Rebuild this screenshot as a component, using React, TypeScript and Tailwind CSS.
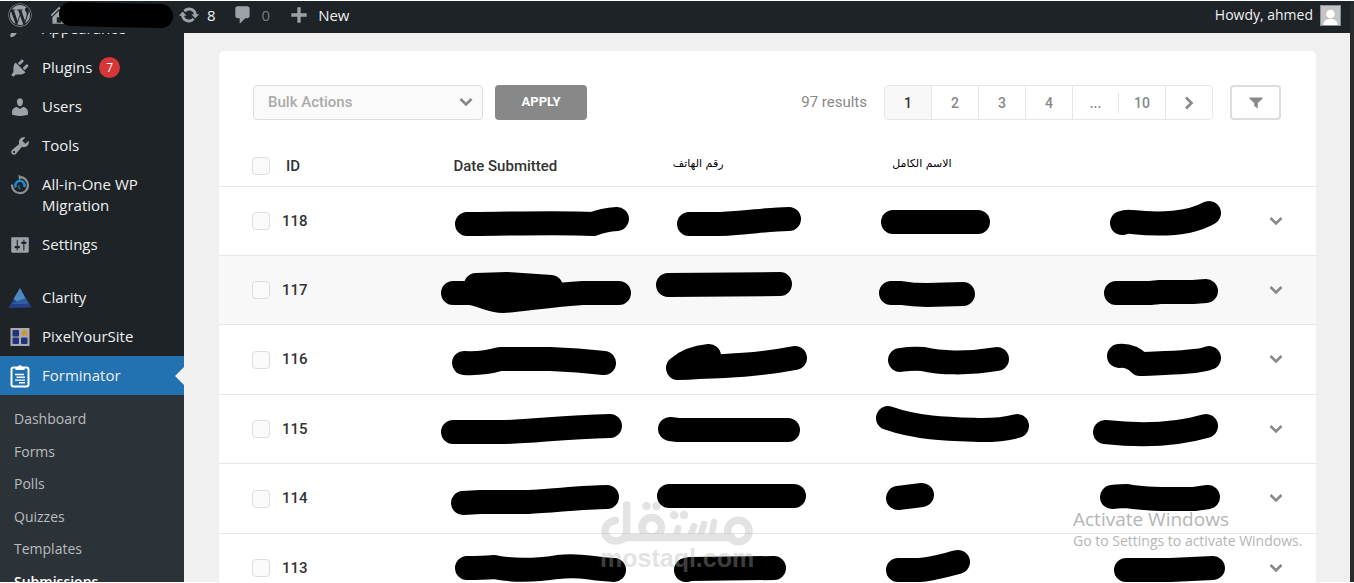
import React from "react";
import { FaWordpress } from "react-icons/fa";

const ICONS = {
  plugins:
    "M13.11 4.36L9.87 7.6 8 5.73l3.24-3.24c.35-.34 1.05-.2 1.56.32.52.51.66 1.21.31 1.55zm-8 1.77l.91-1.12 9.01 9.01-1.19.84c-.71.71-2.63 1.16-3.82 1.16H6.14L4.9 17.26c-.59.59-1.54.59-2.12 0-.59-.58-.59-1.53 0-2.12l1.24-1.24v-3.88c0-1.13.4-3.19 1.09-3.89zm7.26 3.97l3.24-3.24c.34-.35 1.04-.21 1.55.31.52.51.66 1.21.31 1.55l-3.24 3.25z",
  users:
    "M10 9.25c-2.27 0-2.73-3.44-2.73-3.44C7 4.02 7.82 2 9.97 2c2.16 0 2.98 2.02 2.71 3.81 0 0-.41 3.44-2.68 3.44zm0 2.57L12.72 10c2.39 0 4.52 2.33 4.52 4.53v2.49s-3.65 1.13-7.24 1.13c-3.65 0-7.24-1.13-7.24-1.13v-2.49c0-2.25 1.94-4.48 4.47-4.48z",
  tools:
    "M16.68 9.77c-1.34 1.34-3.3 1.67-4.95.99l-5.41 6.52c-.99.99-2.59.99-3.58 0s-.99-2.59 0-3.57l6.52-5.42c-.68-1.65-.35-3.61.99-4.95 1.28-1.28 3.12-1.62 4.72-1.06l-2.89 2.89 2.82 2.82 2.86-2.87c.53 1.58.18 3.39-1.08 4.65zM3.81 16.21c.4.39 1.04.39 1.43 0 .4-.4.4-1.04 0-1.43-.39-.4-1.03-.4-1.43 0-.39.39-.39 1.03 0 1.43z",
  settings:
    "M18 16V4c0-.55-.45-1-1-1H3c-.55 0-1 .45-1 1v12c0 .55.45 1 1 1h14c.55 0 1-.45 1-1zM8 11h1c.55 0 1 .45 1 1s-.45 1-1 1H8v1.5c0 .28-.22.5-.5.5s-.5-.22-.5-.5V13H6c-.55 0-1-.45-1-1s.45-1 1-1h1V5.5c0-.28.22-.5.5-.5s.5.22.5.5V11zm5-2h-1c-.55 0-1-.45-1-1s.45-1 1-1h1V5.5c0-.28.22-.5.5-.5s.5.22.5.5V7h1c.55 0 1 .45 1 1s-.45 1-1 1h-1v5.5c0 .28-.22.5-.5.5s-.5-.22-.5-.5V9z",
  update:
    "M10.2 3.28c3.53 0 6.43 2.61 6.92 6h2.08l-3.5 4-3.5-4h2.32c-.45-1.97-2.21-3.45-4.32-3.45-1.45 0-2.73.71-3.54 1.78L4.95 5.66C6.23 4.2 8.11 3.28 10.2 3.28zm-.4 13.44c-3.52 0-6.43-2.61-6.92-6H.8l3.5-4c1.17 1.33 2.33 2.67 3.5 4H5.48c.45 1.97 2.21 3.45 4.32 3.45 1.45 0 2.73-.71 3.54-1.78l1.71 1.95c-1.28 1.46-3.15 2.38-5.25 2.38z",
  comments:
    "M5 2h9c1.1 0 2 .9 2 2v7c0 1.1-.9 2-2 2h-2l-5 5v-5H5c-1.1 0-2-.9-2-2V4c0-1.1.9-2 2-2z",
  plus: "M17 8.5v3h-5.5V17h-3v-5.5H3v-3h5.5V3h3v5.5H17z",
  home: "M16 8.5l1.53 1.53-1.06 1.06L10 4.6l-6.47 6.49-1.06-1.06L10 2.5l4 4v-2h2v4zm-6-2.46l6 5.99V18H4v-5.97zM12 17v-5H8v5h4z",
  appearance:
    "M14.48 11.06L7.41 3.99l1.5-1.5c.5-.56 2.3-.47 3.51.32 1.21.8 1.43 1.28 2.91 2.1 1.18.64 2.45 1.26 4.45.85zm-.71.71L6.7 4.7 4.93 6.47c-.39.39-.39 1.02 0 1.41l1.06 1.06c.39.39.39 1.03 0 1.42-.6.6-1.43 1.11-2.21 1.69-.35.26-.7.53-1.01.84C1.43 14.23.4 16.08 1.4 17.07c.99 1 2.84-.03 4.18-1.36.31-.31.58-.66.85-1.02.57-.78 1.08-1.61 1.69-2.21.39-.39 1.02-.39 1.41 0l1.06 1.06c.39.39 1.02.39 1.41 0z",
};

function Dashicon({ d, className = "size-[22px]" }: { d: string; className?: string }) {
  return (
    <svg viewBox="0 0 20 20" className={`${className} shrink-0 fill-[#9ca2a7]`} aria-hidden="true">
      <path d={d} />
    </svg>
  );
}

function MigrationIcon() {
  return (
    <svg viewBox="0 0 20 20" className="size-5 shrink-0 fill-none" aria-hidden="true">
      <path d="M9.500 2.200A8 8 0 1 1 2 9.500" stroke="#8f8f8f" strokeWidth="2.200" />
      <path d="M8.500 -.5L12.500 2.300L9 5.200z" fill="#8f8f8f" />
      <path d="M5.800 12.500A4.600 4.600 0 1 1 14.300 12" stroke="#1c8fdb" strokeWidth="2.400" />
      <path d="M10.500 14a3 3 0 0 1-1.500-4" stroke="#1c6fb4" strokeWidth="1.300" />
    </svg>
  );
}

function ClarityIcon() {
  return (
    <svg viewBox="0 0 24 22" className="h-[22px] w-6 shrink-0" aria-hidden="true">
      <path d="M12 1L23.500 20.500L.5 21z" fill="#27408b" />
      <path d="M12 1L17.500 11.500L9 14.500L5.500 12z" fill="#4a8cc0" />
      <path d="M9 14.500L17.500 11.500L21 17L3 17z" fill="#2f5ca3" />
    </svg>
  );
}

function PixelIcon() {
  return (
    <svg viewBox="0 0 20 20" className="size-5 shrink-0" aria-hidden="true">
      <rect x="0.500" y="1" width="19" height="18" fill="#a9abae" />
      <rect x="2.500" y="3" width="6.500" height="6.500" rx="1" fill="#23327c" />
      <rect x="2.500" y="10.500" width="6.500" height="6.500" rx="1" fill="#23327c" />
      <rect x="11" y="10.500" width="6.500" height="6.500" rx="1" fill="#23327c" />
      <path d="M14.200 2l1.300 2 2.400.3-1.200 2 .8 2.300-2.500-.3-1.900 1.300-.6-2.300-1.800-1.400 2-1.300z" fill="#c9972f" />
    </svg>
  );
}

function ForminatorIcon() {
  return (
    <svg viewBox="0 0 20 24" className="h-6 w-5 shrink-0 fill-none stroke-white" aria-hidden="true">
      <rect x="1.500" y="3.500" width="17" height="19" rx="2" strokeWidth="2" />
      <path d="M6 5.500V3.500h2.300a1.700 1.700 0 0 1 3.400 0H14v2z" fill="#fff" strokeWidth="1.200" />
      <path d="M5 10.500h9M6.500 13.300h8.500M5 16.100h10M9 18.700h6" strokeWidth="1.400" />
    </svg>
  );
}

const menuTop = [
  { label: "Appearance", icon: <Dashicon d={ICONS.appearance} /> },
  { label: "Plugins", icon: <Dashicon d={ICONS.plugins} />, count: 7 },
  { label: "Users", icon: <Dashicon d={ICONS.users} /> },
  { label: "Tools", icon: <Dashicon d={ICONS.tools} /> },
  { label: "All-in-One WP Migration", icon: <MigrationIcon /> },
  { label: "Settings", icon: <Dashicon d={ICONS.settings} /> },
];

const menuPlugins = [
  { label: "Clarity", icon: <ClarityIcon /> },
  { label: "PixelYourSite", icon: <PixelIcon /> },
  { label: "Forminator", icon: <ForminatorIcon />, active: true },
];

const submenu = ["Dashboard", "Forms", "Polls", "Quizzes", "Templates", "Submissions"];

type Item = { label: string; icon: React.ReactNode; count?: number; active?: boolean };

function MenuItem({ label, icon, count, active }: Item) {
  return (
    <li className={active ? "relative bg-[#2271b1]" : ""}>
      <a href="#" className="flex items-start py-[9px] pr-8 text-[15px] leading-[21px] text-[#f0f0f1]">
        <span className="flex h-[21px] w-[42px] shrink-0 items-center justify-center pr-0.5">{icon}</span>
        <span>{label}</span>
        {count !== undefined && (
          <span className="ml-[7px] flex size-[21px] items-center justify-center rounded-full bg-[#d63638] text-xs text-white">
            {count}
          </span>
        )}
      </a>
      {active && (
        <span className="absolute top-[11px] right-0 border-y-[9px] border-r-[9px] border-y-transparent border-r-[#f0f0f1]" />
      )}
    </li>
  );
}

const rows = [
  {
    id: 118,
    marks: [
      "M29 37C70 37 120 35 155 37Q165 33 179 32",
      "M31 37H62C90 36 110 32 131 32",
      "M16 35H101",
      "M25 36Q30 34 35 35C62 38 93 37 112 26",
    ],
  },
  {
    id: 117,
    marks: [
      "M15 37H32C45 39 52 45 65 45C85 44 110 39 145 37H181M38 29L69 28L113 31",
      "M10 29L122 28",
      "M14 37H24Q36 39 50 39L86 38",
      "M19 37H53L63 36H96L109 35",
    ],
  },
  {
    id: 116,
    marks: [
      "M26 38Q45 39 62 34H112Q140 35 166 38",
      "M20 43C28 36 40 32 51 31M20 43Q30 43 40 42C70 41 100 40 137 33",
      "M23 35Q36 33 46 34C62 38 90 39 120 34",
      "M22 31C32 30 38 34 43 39C60 38 100 38 112 33",
    ],
  },
  {
    id: 115,
    marks: [
      "M15 37H68C100 36 125 32 172 31",
      "M12 34L20 35H130",
      "M11 23C42 34 75 34 105 35Q125 35 140 31",
      "M8 37C35 40 75 41 109 31",
    ],
  },
  {
    id: 114,
    marks: [
      "M25 39L42 38H90C115 37 145 33 169 33",
      "M11 32H136",
      "M21 34L45 31",
      "M15 33Q25 32 30 32C50 36 75 35 97 35L111 33",
    ],
  },
  {
    id: 113,
    marks: [
      "M29 34Q45 34 56 33C75 37 100 36 120 33C145 30 150 35 176 36",
      "M28 36L32 35L116 34",
      "M21 36H42C56 35 68 31 81 28",
      "M29 36H73L116 34",
    ],
  },
];

function Mark({ d, className }: { d: string; className: string }) {
  return (
    <svg
      className={`block h-[68px] overflow-visible fill-none stroke-black ${className}`}
      strokeWidth="24"
      strokeLinecap="round"
      strokeLinejoin="round"
      aria-hidden="true"
    >
      <path d={d} />
    </svg>
  );
}

function Chevron({ className = "" }: { className?: string }) {
  return (
    <svg viewBox="0 0 14 10" className={`h-2.5 w-3.5 fill-none stroke-[#888888] ${className}`} strokeWidth="2.600" aria-hidden="true">
      <path d="M1.500 2L7 7.500L12.500 2" />
    </svg>
  );
}

function Checkbox({ label }: { label: string }) {
  return (
    <input
      type="checkbox"
      aria-label={label}
      className="size-[18px] shrink-0 appearance-none rounded-[4px] border border-[#dddddd] bg-[#fafafa]"
    />
  );
}

function AdminBar() {
  return (
    <header className="flex h-8 shrink-0 items-center bg-[#1d2327] pb-1 text-[15px] leading-[21px] text-[#f0f0f1]">
      <a href="#" aria-label="About WordPress" className="ml-2">
        <FaWordpress className="size-6 text-[#9ca2a7]" />
      </a>
      <a href="#" aria-label="Visit site" className="ml-4 flex items-center">
        <Dashicon d={ICONS.home} />
        <svg
          className="-ml-3.5 h-7 w-[116px] overflow-visible fill-none stroke-black"
          strokeWidth="24"
          strokeLinecap="round"
          aria-hidden="true"
        >
          <path d="M15 13Q50 14 105 15" />
        </svg>
      </a>
      <a href="#" className="ml-1.5 flex items-center gap-[7px]">
        <Dashicon d={ICONS.update} />
        8
      </a>
      <a href="#" className="ml-4 flex items-center gap-2 text-[#9ca2a7]">
        <Dashicon d={ICONS.comments} />
        <span className="opacity-70">0</span>
      </a>
      <a href="#" className="ml-[18px] flex items-center gap-2">
        <Dashicon d={ICONS.plus} />
        New
      </a>
      <a href="#" className="mr-[9px] ml-auto flex items-center gap-[7px] text-sm">
        Howdy, ahmed
        <svg viewBox="0 0 21 21" className="size-[21px]" aria-hidden="true">
          <rect width="21" height="21" fill="#8c8f94" />
          <rect x="1" y="1" width="19" height="19" fill="#c4c4c4" />
          <circle cx="10.500" cy="9" r="4.300" fill="#fff" />
          <path d="M3.500 20c0-4 2.500-6 7-6s7 2 7 6z" fill="#fff" />
        </svg>
      </a>
    </header>
  );
}

function Toolbar() {
  const page = "flex h-[33px] w-[47px] items-center justify-center border-r border-[#e6e6e6]";
  return (
    <div className="flex items-center pt-[34px] pr-[35px] pl-[34px] text-sm font-medium">
      <div className="relative">
        <select
          aria-label="Bulk Actions"
          className="block h-[35px] w-[230px] appearance-none rounded-[4px] border border-[#dddddd] bg-[#fafafa] pl-3.5 text-[15px] text-[#aaaaaa]"
        >
          <option>Bulk Actions</option>
        </select>
        <Chevron className="pointer-events-none absolute top-3 right-2.5" />
      </div>
      <button type="button" className="ml-3 h-[35px] w-[92px] rounded-[4px] bg-[#888888] text-[13px] font-bold text-white">
        APPLY
      </button>
      <span className="ml-auto text-[15px] font-normal text-[#888888]">97 results</span>
      <nav
        aria-label="Pagination"
        className="ml-[17px] flex items-center overflow-hidden rounded-[4px] border border-[#e6e6e6] text-[#888888]"
      >
        <a href="#" aria-current="page" className={`${page} bg-[#f8f8f8] text-[#333333]`}>1</a>
        <a href="#" className={page}>2</a>
        <a href="#" className={page}>3</a>
        <a href="#" className={page}>4</a>
        <span className="flex h-5 w-[46px] items-center justify-center border-r border-[#e6e6e6]">...</span>
        <a href="#" className={page}>10</a>
        <a href="#" aria-label="Next page" className="flex w-[46px] items-center justify-center">
          <Chevron className="-rotate-90" />
        </a>
      </nav>
      <button
        type="button"
        aria-label="Filter"
        className="ml-[17px] flex h-[35px] w-[51px] items-center justify-center rounded-[4px] border-2 border-[#dddddd]"
      >
        <svg viewBox="0 0 14 12" className="h-3 w-3.5 fill-[#888888]" aria-hidden="true">
          <path d="M.5.500h13v1.200L8.800 6v5.500L5.200 9V6L.5 1.700z" />
        </svg>
      </button>
    </div>
  );
}

function SubmissionsTable() {
  const th = "border-b border-[#e6e6e6] pl-[15px] text-left font-medium";
  const td = "border-b border-[#e6e6e6] p-0";
  const arabic = "block pb-1 font-['DejaVu_Sans',sans-serif] text-[11px] font-normal text-black";
  return (
    <table className="mt-[26px] w-full table-fixed border-separate border-spacing-0 text-[15px] text-[#333333]">
      <thead>
        <tr className="h-[41px]">
          <th className="border-b border-[#e6e6e6] pl-[33px] text-left font-medium">
            <span className="flex items-center gap-4">
              <Checkbox label="Select all" />
              ID
            </span>
          </th>
          <th className={th}>Date Submitted</th>
          <th className={th}>
            <span lang="ar" className={arabic}>رقم الهاتف</span>
          </th>
          <th className={th}>
            <span lang="ar" className={arabic}>الاسم الكامل</span>
          </th>
          <th className={th} />
        </tr>
      </thead>
      <tbody>
        {rows.map((row) => (
          <tr key={row.id} className={`h-[69px] [&:nth-child(2n+3)]:h-[70px] ${row.id === 117 ? "bg-[#f8f8f8]" : ""}`}>
            <td className={`${td} pl-[33px] font-medium`}>
              <span className="flex items-center gap-3">
                <Checkbox label={`Select submission ${row.id}`} />
                {row.id}
              </span>
            </td>
            {row.marks.slice(0, 3).map((d) => (
              <td key={d} className={`${td} align-top`}>
                <Mark d={d} className="w-full" />
              </td>
            ))}
            <td className={`${td} align-top`}>
              <div className="flex items-center">
                <Mark d={row.marks[3]} className="w-0 flex-1" />
                <button type="button" aria-label={`Expand submission ${row.id}`} className="mr-[33px]">
                  <Chevron />
                </button>
              </div>
            </td>
          </tr>
        ))}
      </tbody>
    </table>
  );
}

function Watermark() {
  return (
    <div className="pointer-events-none absolute bottom-[13px] left-1/2 flex w-[154px] -translate-x-1/2 flex-col text-[#b0b0b0] opacity-35">
      <svg viewBox="0 0 154 46" className="h-[46px] w-[154px] fill-none stroke-current" strokeWidth="7.500" strokeLinecap="round" aria-hidden="true">
        <path d="M15.500 20.500C2 22 1 41 16 41C22 41 26.700 37 26.700 31V5M24 37.500H132" />
        <circle cx="51.700" cy="27.300" r="9.700" />
        <circle cx="138.300" cy="31" r="10.700" />
        <path d="M78 28L77 34M94 26L91 34M104 24L101 34M114 22L112 34" strokeWidth="6.500" />
        <g className="fill-current stroke-none">
          <circle cx="46.500" cy="6" r="4.300" />
          <circle cx="56.500" cy="6" r="4.300" />
          <circle cx="74" cy="15" r="4.300" />
          <circle cx="84" cy="15" r="4.300" />
        </g>
      </svg>
      <span className="text-center font-['Liberation_Sans',sans-serif] text-[25px] leading-6 font-bold">mostaql.com</span>
    </div>
  );
}

export default function App() {
  return (
    <div className="relative flex h-screen overflow-hidden bg-white py-px font-['Open_Sans','Noto_Sans',sans-serif]">
      <div className="flex min-w-0 flex-1 flex-col">
        <AdminBar />
        <div className="flex min-h-0 flex-1">
          <aside className="w-[184px] shrink-0 overflow-hidden bg-[#1d2327]">
            <ul className="-mt-6">
              {menuTop.map((item) => (
                <MenuItem key={item.label} {...item} />
              ))}
            </ul>
            <ul className="mt-3.5">
              {menuPlugins.map((item) => (
                <MenuItem key={item.label} {...item} />
              ))}
            </ul>
            <ul className="bg-[#2c3338] pt-2 text-sm text-[#b9bcbf]">
              {submenu.map((label) => (
                <li key={label} className="flex h-8 items-center even:h-[33px]">
                  <a href="#" className={label === "Submissions" ? "pl-3.5 font-semibold text-white" : "pl-3.5"}>
                    {label}
                  </a>
                </li>
              ))}
            </ul>
          </aside>
          <main className="min-w-0 flex-1 overflow-hidden bg-[#f0f0f0] pt-[18px] pr-[34px] pl-[35px]">
            <section className="rounded-t-[5px] bg-white font-[Roboto,sans-serif]">
              <Toolbar />
              <SubmissionsTable />
            </section>
          </main>
        </div>
      </div>
      <div className="w-1 shrink-0 bg-[#2b2b2b]" />
      <Watermark />
      <div className="pointer-events-none absolute right-[45px] bottom-8 w-[236px] whitespace-nowrap text-[#b5b5b5]">
        <p className="text-[19px] leading-6">Activate Windows</p>
        <p className="text-sm leading-5">Go to Settings to activate Windows.</p>
      </div>
    </div>
  );
}
